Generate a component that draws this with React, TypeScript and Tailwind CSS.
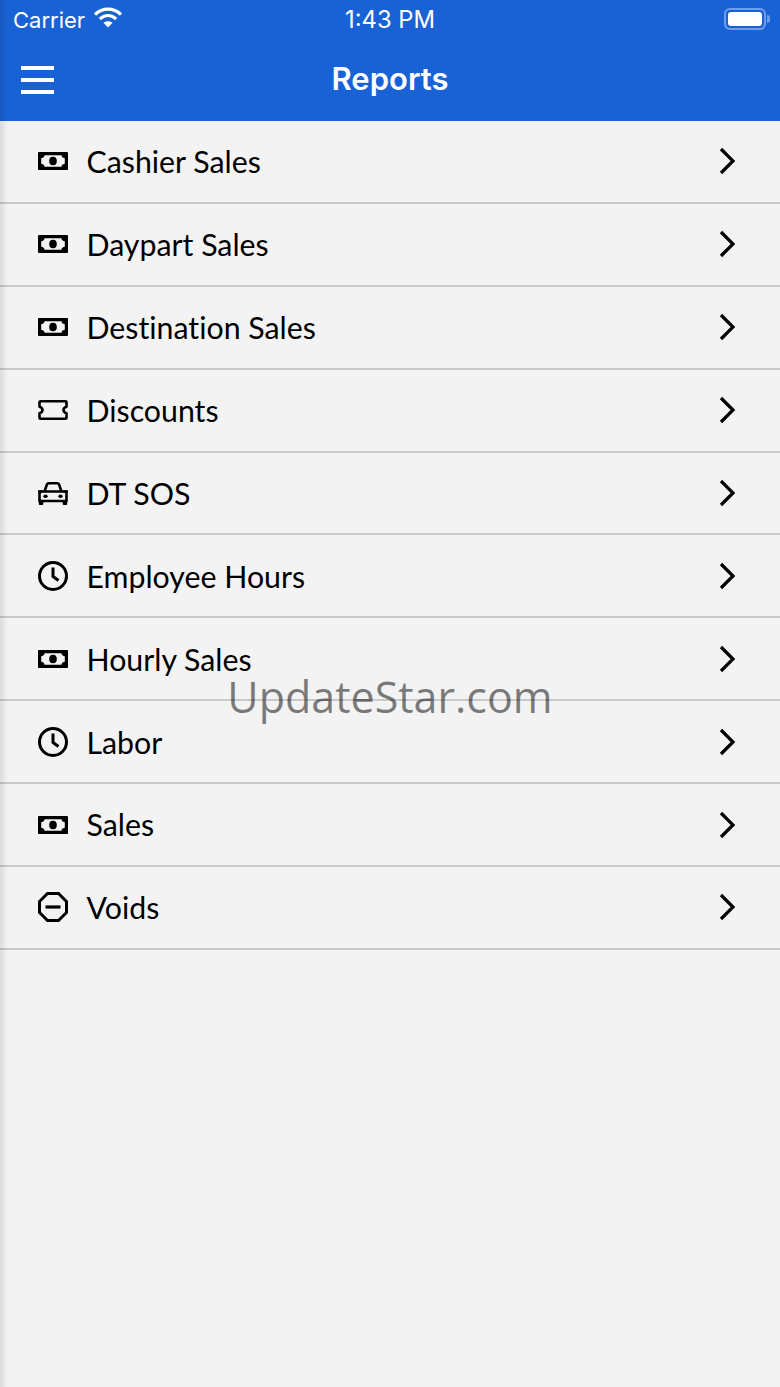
const F = "[font-family:Lato,sans-serif]";

const Money = () => (
  <svg width="30" height="18" viewBox="0 0 30 18" fill="none">
    <path fillRule="evenodd" clipRule="evenodd" fill="#000" d="M1 0h28a1 1 0 0 1 1 1v16a1 1 0 0 1-1 1H1a1 1 0 0 1-1-1V1a1 1 0 0 1 1-1ZM6.500 3.200C6.500 4.800 5 6.200 3.200 6.200v5.600c1.800 0 3.300 1.400 3.300 3h17c0-1.600 1.500-3 3.300-3V6.200c-1.800 0-3.300-1.400-3.300-3h-17Z" />
    <ellipse cx="15" cy="9" rx="3.800" ry="4.300" fill="#000" />
  </svg>
);
const Ticket = () => (
  <svg width="30" height="20" viewBox="0 0 30 20" fill="none" stroke="#000" strokeWidth="2.600" strokeLinejoin="round">
    <path d="M2.500 1.300h25a1 1 0 0 1 1 1v4.400c-2 .6-3 1.800-3 3.300s1 2.700 3 3.300v4.400a1 1 0 0 1-1 1h-25a1 1 0 0 1-1-1v-4.400c2-.6 3-1.800 3-3.300s-1-2.700-3-3.300V2.300a1 1 0 0 1 1-1Z" />
  </svg>
);
const Car = () => (
  <svg width="30" height="23" viewBox="0 0 30 23" fill="none">
    <path d="M1.500 9.500h27M6.500 9.500l2.300-6.700c.3-.8 1-1.500 2-1.500h8.400c1 0 1.700.7 2 1.500l2.300 6.700M2.500 9.500c-.6.600-1 1.800-1 2.800V19h27v-6.700c0-1-.4-2.200-1-2.800" stroke="#000" strokeWidth="2.600" strokeLinejoin="round" />
    <path d="M0 8.200h4.500v2.600H0zM25.500 8.200H30v2.600h-4.500z" fill="#000" />
    <path d="M.8 18h4.500v4a1 1 0 0 1-1 1H1.800a1 1 0 0 1-1-1v-4ZM24.700 18h4.500v4a1 1 0 0 1-1 1h-2.500a1 1 0 0 1-1-1v-4Z" fill="#000" />
    <ellipse cx="7.500" cy="14.300" rx="2.200" ry="1.700" fill="#000" />
    <ellipse cx="22.500" cy="14.300" rx="2.200" ry="1.700" fill="#000" />
  </svg>
);
const Clock = () => (
  <svg width="30" height="30" viewBox="0 0 30 30" fill="none" stroke="#000">
    <circle cx="15" cy="15" r="13.500" strokeWidth="3" />
    <path d="M15 6.500v9l5.500 4" strokeWidth="3" strokeLinejoin="round" />
  </svg>
);
const Void = () => (
  <svg width="30" height="30" viewBox="0 0 30 30" fill="none" stroke="#000">
    <path d="M9.500 1.500h11l8 8v11l-8 8h-11l-8-8v-11l8-8Z" strokeWidth="3" strokeLinejoin="miter" />
    <path d="M7.500 15h15" strokeWidth="3.200" />
  </svg>
);

const rows: [string, () => React.ReactElement][] = [
  ["Cashier Sales", Money],
  ["Daypart Sales", Money],
  ["Destination Sales", Money],
  ["Discounts", Ticket],
  ["DT SOS", Car],
  ["Employee Hours", Clock],
  ["Hourly Sales", Money],
  ["Labor", Clock],
  ["Sales", Money],
  ["Voids", Void],
];

export default function App() {
  return (
    <div className="relative w-[780px] h-[1387px] overflow-hidden bg-[#f3f3f3]">
      <header className="h-[121px] bg-[#1862d6] text-white flex flex-col">
        <div className="relative h-[40px] flex items-center px-[13px] [font-family:Inter,sans-serif] text-[22px]">
          <span>Carrier</span>
          <svg className="ml-[8px] mb-[6px]" width="30" height="22" viewBox="0 0 30 22" fill="none" stroke="#fff">
            <path d="M2 8.500C9.500 1.300 20.500 1.300 28 8.500" strokeWidth="3.200" />
            <path d="M6.800 13c5-4.500 11.400-4.500 16.400 0" strokeWidth="3.200" />
            <path d="M15 21.500l-4.600-4.700c2.700-2.100 6.500-2.100 9.200 0L15 21.500Z" fill="#fff" stroke="none" />
          </svg>
          <span className="absolute inset-x-0 top-[7px] text-center text-[23.800px] leading-[26px]">1:43 PM</span>
          <div className="absolute left-[724px] top-[8px] flex items-center">
            <div className="w-[42px] h-[22px] rounded-[6px] border-2 border-[#6f9ee8] p-[2px]">
              <div className="w-full h-full rounded-[3px] bg-white" />
            </div>
            <div className="ml-[1px] w-[3px] h-[8px] rounded-r-full bg-[#6f9ee8]" />
          </div>
        </div>
        <div className="relative flex-1 flex items-center justify-center">
          <div className="absolute left-[21px] top-[26px] w-[33px] flex flex-col gap-[8px]">
            <div className="h-[4px] bg-white" />
            <div className="h-[4px] bg-white" />
            <div className="h-[4px] bg-white" />
          </div>
          <h1 className="[font-family:Inter,sans-serif] text-[31px] font-semibold leading-none mb-[4px]">Reports</h1>
        </div>
      </header>

      <ul>
        {rows.map(([label, Icon]) => (
          <li key={label} className="h-[82.9px] flex items-center border-b-2 border-[#c9c9c9]">
            <div className="w-[87px] pl-[38px] flex items-center">
              <Icon />
            </div>
            <span className={`${F} text-[30.300px] text-black leading-none flex-1 -ml-[0.5px] [font-variant-ligatures:none]`}>{label}</span>
            <svg className="mr-[44px]" width="17" height="28" viewBox="0 0 17 28" fill="none" stroke="#000" strokeWidth="3.200">
              <path d="M2 2 14 14 2 26" />
            </svg>
          </li>
        ))}
      </ul>

      <div className="absolute inset-y-0 left-0 w-[8px] bg-gradient-to-r from-black/10 to-transparent pointer-events-none" />
      <div className="absolute left-0 right-0 top-[670px] text-center text-[43px] leading-[54px] text-black/50 [font-family:'Open_Sans',sans-serif] pointer-events-none">
        UpdateStar.com
      </div>
    </div>
  );
}
